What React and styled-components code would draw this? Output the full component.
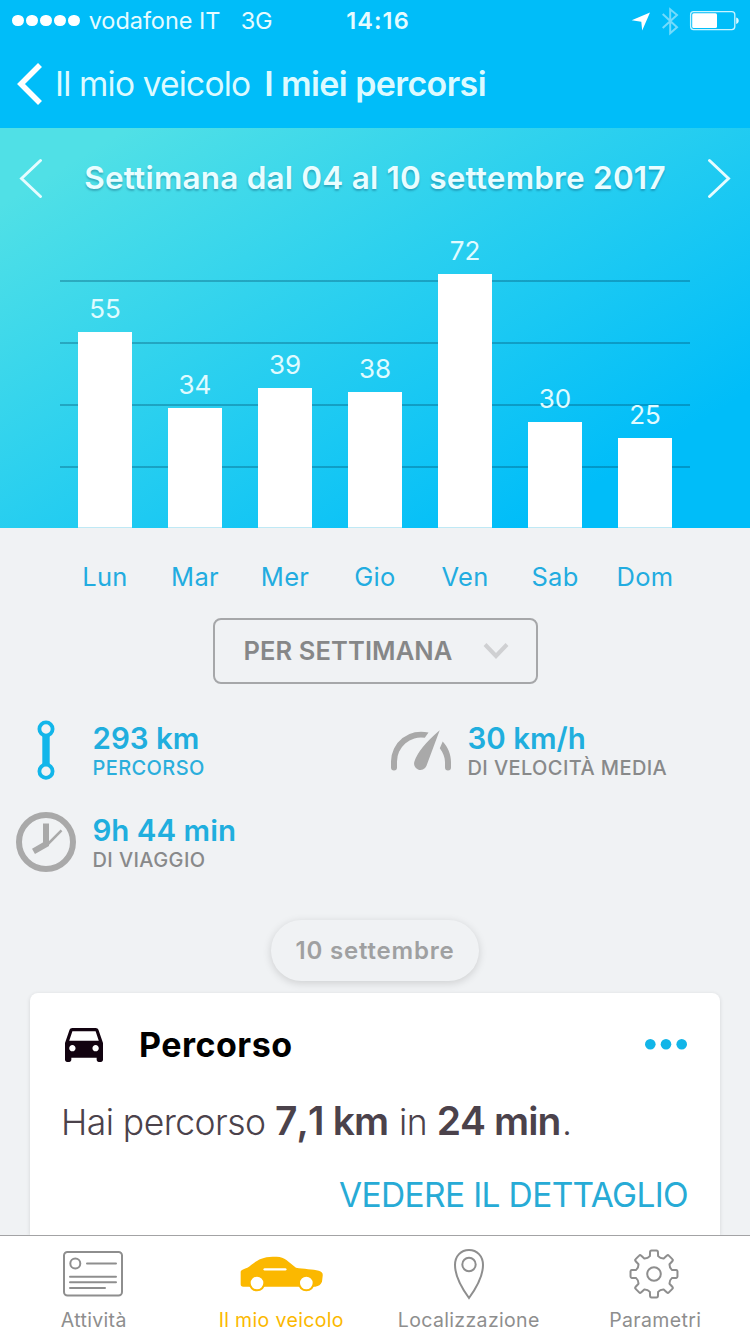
import React from "react";
import styled, { createGlobalStyle } from "styled-components";

const GlobalStyle = createGlobalStyle`
  * {
    box-sizing: border-box;
  }
  body {
    margin: 0;
    background: #f0f2f4;
    font-family: Inter, "Liberation Sans", sans-serif;
  }
  svg {
    display: block;
    flex: none;
  }
`;

const Screen = styled.div`
  width: 750px;
  height: 1334px;
  overflow: hidden;
  display: flex;
  flex-direction: column;
  background: #f0f2f4;
`;

const StatusBar = styled.div`
  height: 41px;
  flex: none;
  display: grid;
  grid-template-columns: 1fr auto 1fr;
  align-items: center;
  padding: 0 11px 0 12px;
  background: #00bdf9;
  color: #e6fbff;
  font-size: 23.5px;
  line-height: 41px;
`;

const Carrier = styled.div`
  display: flex;
  align-items: center;
  span {
    margin-left: 8.8px;
    letter-spacing: -0.05px;
  }
  span + span {
    margin-left: 20.5px;
    letter-spacing: -0.4px;
  }
`;

const Signal = styled.div`
  display: flex;
  gap: 2.6px;
  i {
    width: 11.5px;
    height: 11.5px;
    border-radius: 50%;
    background: #fff;
  }
`;

const Clock = styled.div`
  padding-left: 5px;
  font-weight: 600;
  letter-spacing: 1.1px;
`;

const StatusIcons = styled.div`
  display: flex;
  justify-content: flex-end;
  align-items: center;
`;

const Navbar = styled.nav`
  height: 87px;
  flex: none;
  display: flex;
  align-items: flex-start;
  padding: 0 16px 0 15px;
  background: #00bdf9;
  color: #dcfaff;
  font-size: 34px;
  line-height: 86px;
`;

const BackLink = styled.a`
  display: flex;
  align-items: center;
  font-size: 33.5px;
  letter-spacing: -0.82px;
  svg {
    margin-right: 10px;
  }
`;

const Title = styled.h1`
  margin: 0 0 0 14px;
  font-size: 34px;
  font-weight: 600;
  letter-spacing: -0.6px;
  line-height: 86px;
`;

const ChartPanel = styled.section`
  height: 400px;
  flex: none;
  display: flex;
  flex-direction: column;
  background: linear-gradient(149deg, #50e0e6 9%, #00bdf9 84%);
`;

const WeekPicker = styled.div`
  flex: none;
  display: flex;
  justify-content: space-between;
  align-items: center;
  height: 100px;
  padding: 0 19px;
  h2 {
    margin: 0;
    font-size: 31.5px;
    font-weight: 600;
    line-height: 100px;
    letter-spacing: 0.2px;
    color: #e9fdff;
    text-shadow: 0 2px 2px rgba(0, 60, 90, 0.3);
  }
`;

/* one rule every 62px, the first one 52px below the week picker */
const Plot = styled.div`
  flex: 1;
  margin: 0 60px;
  display: grid;
  grid-template-columns: repeat(7, 1fr);
  align-items: end;
  background: repeating-linear-gradient(
      to bottom,
      rgba(0, 70, 100, 0.32) 0,
      rgba(0, 70, 100, 0.32) 2px,
      transparent 2px,
      transparent 62px
    )
    0 52px / 100% 248px no-repeat;
`;

const Column = styled.div`
  display: flex;
  flex-direction: column;
  align-items: center;
  span {
    font-size: 26px;
    line-height: 46px;
    letter-spacing: 0;
    color: #e0fbff;
  }
`;

const Bar = styled.div`
  width: 54px;
  background: #fff;
  border-bottom: 1px solid #bfe9f5;
`;

const Days = styled.div`
  flex: none;
  height: 90px;
  padding: 0 60px;
  display: grid;
  grid-template-columns: repeat(7, 1fr);
  text-align: center;
  font-size: 25.5px;
  line-height: 98px;
  letter-spacing: 0.3px;
  color: #22ace0;
`;

const PeriodSelect = styled.button`
  flex: none;
  align-self: center;
  width: 325px;
  height: 66px;
  padding: 0 27px 1px 29px;
  display: flex;
  justify-content: space-between;
  align-items: center;
  background: transparent;
  border: 2px solid #a6a7a9;
  border-radius: 8px;
  font-family: inherit;
  font-size: 25.5px;
  font-weight: 600;
  letter-spacing: 0.1px;
  color: #868788;
`;

const Stats = styled.div`
  flex: none;
  display: grid;
  grid-template-columns: 375px 359px;
  grid-auto-rows: 60px;
  row-gap: 32px;
  margin-top: 36px;
  padding-left: 16px;
`;

const Stat = styled.div`
  display: flex;
  gap: 16.5px;
  align-items: center;
`;

const StatIcon = styled.div`
  width: 60px;
  display: flex;
  justify-content: center;
`;

const StatValue = styled.div`
  padding-top: 2px;
  font-size: 29.5px;
  font-weight: 600;
  line-height: 34px;
  color: #20aede;
`;

const StatLabel = styled.div`
  font-size: 20px;
  font-weight: 500;
  line-height: 26px;
  letter-spacing: 0.4px;
  white-space: nowrap;
  color: ${(props) => (props.$active ? "#2aaedc" : "#88898a")};
`;

const DatePill = styled.div`
  flex: none;
  align-self: center;
  width: 208px;
  height: 61px;
  margin-top: 48px;
  border-radius: 31px;
  box-shadow: 0 2px 9px rgba(0, 0, 0, 0.15);
  text-align: center;
  font-size: 24px;
  font-weight: 600;
  line-height: 61px;
  letter-spacing: 0.8px;
  color: #9fa0a1;
`;

const Card = styled.article`
  flex: 1;
  margin: 12px 30px 0;
  padding: 0 32px 0 31px;
  background: #fff;
  border-radius: 8px 8px 0 0;
  box-shadow: 0 1px 4px rgba(0, 0, 0, 0.12);
`;

const CardHeader = styled.header`
  display: flex;
  align-items: center;
  height: 103px;
  padding-left: 4px;
  h3 {
    flex: 1;
    margin: 0 0 0 36px;
    font-size: 34px;
    font-weight: 700;
    letter-spacing: 0.5px;
    color: #000;
  }
`;

const CardText = styled.p`
  margin: 0;
  height: 66px;
  line-height: 50px;
  font-size: 35.5px;
  font-weight: 300;
  letter-spacing: -0.55px;
  color: #4b424b;
  b {
    margin-right: 1.5px;
    font-size: 39px;
    font-weight: 600;
    font-kerning: none;
    letter-spacing: -0.9px;
  }
`;

const CardAction = styled.div`
  text-align: right;
  font-size: 33.5px;
  line-height: 66px;
  letter-spacing: -0.65px;
  color: #27abd6;
`;

const Tabbar = styled.nav`
  flex: none;
  height: 99px;
  display: grid;
  grid-template-columns: repeat(4, 1fr);
  background: #fff;
  border-top: 1px solid #a3a3a5;
`;

const Tab = styled.a`
  display: flex;
  flex-direction: column;
  align-items: center;
  padding-right: ${(props) => props.$right || 0}px;
  color: ${(props) => (props.$active ? "#fbb800" : "#8e8e8e")};
  font-size: 19.5px;
  line-height: 27px;
  letter-spacing: 0.35px;
  white-space: nowrap;
`;

const TabIcon = styled.div`
  height: 71px;
  padding: 4px ${(props) => props.$right || 0}px 0 ${(props) => props.$left || 0}px;
  display: flex;
  align-items: center;
`;

const week = [
  { day: "Lun", km: 55, height: 195.7 },
  { day: "Mar", km: 34, height: 119.7 },
  { day: "Mer", km: 39, height: 139.6 },
  { day: "Gio", km: 38, height: 136 },
  { day: "Ven", km: 72, height: 254 },
  { day: "Sab", km: 30, height: 105.7 },
  { day: "Dom", km: 25, height: 89.7 },
];

const gearPath = () => {
  const at = (r, deg) => {
    const a = (deg * Math.PI) / 180;
    return `${(25 + r * Math.sin(a)).toFixed(2)} ${(25 - r * Math.cos(a)).toFixed(2)}`;
  };
  let d = "";
  for (let i = 0; i < 8; i++) {
    const t = i * 45;
    d += `${i ? "L" : "M"}${at(18.3, t - 13)}L${at(22.6, t - 10)}Q${at(23.8, t - 9)} ${at(23.6, t - 6)}`;
    d += `L${at(23.6, t + 6)}Q${at(23.8, t + 9)} ${at(22.6, t + 10)}L${at(18.3, t + 13)}`;
    d += `Q${at(16.6, t + 22.5)} ${at(18.3, t + 32)}`;
  }
  return d + "Z";
};

const BackIcon = () => (
  <svg width="30" height="44" viewBox="0 0 30 44" fill="none">
    <path d="M25 3 6 22l19 19" stroke="#fff" strokeWidth="5.6" />
  </svg>
);

const Arrow = ({ d }) => (
  <svg width="24" height="40" viewBox="0 0 24 40" fill="none">
    <path d={d} stroke="#e6fcff" strokeWidth="2.9" strokeLinecap="round" />
  </svg>
);

const StatusGlyphs = () => (
  <svg width="108" height="30" viewBox="631 5.5 108 30" fill="none">
    <path d="M650 12 642.2 30l-.9-8.8-9.6-1.5z" fill="#fff" />
    <path
      d="M662.7 13.5 677 26.8l-6.8 6V8.8l6.8 5.8-14.300 13"
      stroke="#fff"
      strokeOpacity=".45"
      strokeWidth="2"
    />
    <rect x="690.6" y="11.1" width="44.2" height="18" rx="3" stroke="#c9f4ff" strokeWidth="1.3" />
    <rect x="692.2" y="12.7" width="24.8" height="14.8" rx="1.5" fill="#fff" />
    <path d="M736.2 17c1.5.3 2.500 1.6 2.500 3.200s-1 2.900-2.500 3.200z" fill="#dff9ff" />
  </svg>
);

const RouteIcon = () => (
  <svg width="18" height="60" viewBox="0 0 18 60" fill="none" stroke="#12b6ea">
    <path d="M9 14v32" strokeWidth="7.4" />
    <circle cx="9" cy="9" r="6.6" strokeWidth="3.8" />
    <circle cx="9" cy="51.3" r="6.6" strokeWidth="3.8" />
  </svg>
);

const SpeedIcon = () => (
  <svg width="60" height="60" viewBox="0 -10 60 60" fill="#a9a9a9">
    <path d="M37.5 2.6A30 30 0 0 0 0 32v5.5a3 3 0 0 0 6 0V32A24 24 0 0 1 33.8 7.8z" />
    <path d="M48.7.3 35.4 36A6.200 6.200 0 1 1 23.600 31Q28 18 48.700.3z" />
    <path d="M51.7 11.5C57 17 60 24.5 60 32v5.5a3 3 0 0 1-6 0V32c0-5-2-9.500-5.200-13.800z" />
  </svg>
);

const TimeIcon = () => (
  <svg width="60" height="60" viewBox="0 0 60 60" fill="none" stroke="#a9a9a9">
    <circle cx="30" cy="30" r="27" strokeWidth="6" />
    <path d="M30 11.5v20.7L17.5 39.3" strokeWidth="6" />
    <path d="M31 33 45.500 18.300" strokeWidth="2.5" />
  </svg>
);

const CarFrontIcon = () => (
  <svg width="38" height="34" viewBox="3 5 18 16">
    <path
      fill="#120310"
      d="M18.92 6.01C18.72 5.42 18.16 5 17.5 5h-11c-.66 0-1.21.42-1.42 1.01L3 12v8c0 .55.45 1 1 1h1c.55 0 1-.45 1-1v-1h12v1c0 .55.45 1 1 1h1c.55 0 1-.45 1-1v-8l-2.08-5.99zM6.500 16c-.83 0-1.500-.67-1.500-1.500S5.670 13 6.500 13s1.500.67 1.500 1.500S7.330 16 6.500 16zm11 0c-.83 0-1.500-.67-1.500-1.500s.67-1.500 1.500-1.500 1.500.67 1.500 1.500-.67 1.500-1.500 1.500zM5 11l1.500-4.500h11L19 11H5z"
    />
  </svg>
);

const MoreIcon = () => (
  <svg width="44" height="14" viewBox="0 0 44 14" fill="#12b5e8">
    <circle cx="6.3" cy="6.3" r="5.3" />
    <circle cx="22" cy="6.3" r="5.3" />
    <circle cx="37.7" cy="6.3" r="5.3" />
  </svg>
);

const NewsIcon = () => (
  <svg width="60" height="46" viewBox="0 0 60 46" fill="none" stroke="#8e8e8e" strokeWidth="2">
    <rect x="1" y="1" width="58" height="43.5" rx="3.5" />
    <circle cx="12.3" cy="12.6" r="5" />
    <path d="M24 12.6h29M7 25.7h46M7 31.3h46M7 36.9h35" strokeLinecap="round" />
  </svg>
);

const CarSideIcon = () => (
  <svg width="84" height="37" viewBox="0 0 252 111">
    <path
      fill="#fbb800"
      d="M2 88V52c0-8 8-9 20-14C40 28 55 5 98 5h12c25 0 34 15 58 33 22 4 52 4 68 9 11 3 13 8 12 16l-2 17c-4 9-10 13-20 15H10c-6 0-8-2-8-7z"
    />
    <path d="M74 43h62" stroke="#fff" strokeWidth="7" strokeLinecap="round" />
    <circle cx="51" cy="84" r="22" fill="#fff" stroke="#fbb800" strokeWidth="6" />
    <circle cx="199" cy="84" r="22" fill="#fff" stroke="#fbb800" strokeWidth="6" />
  </svg>
);

const PinIcon = () => (
  <svg width="32" height="52" viewBox="0 0 32 52" fill="none" stroke="#8e8e8e" strokeWidth="2">
    <path d="M16 50C10.5 42.5 2 29 2 17 2 8 8 2 16 2s14 6 14 15c0 12-8.500 25.500-14 33z" />
    <circle cx="16" cy="16.5" r="6.7" />
  </svg>
);

const GearIcon = () => (
  <svg width="50" height="50" viewBox="0 0 50 50" fill="none" stroke="#8e8e8e" strokeWidth="2">
    <path d={gearPath()} strokeLinejoin="round" />
    <circle cx="25" cy="25" r="6.8" />
  </svg>
);

const App = () => {
  return (
    <Screen>
      <GlobalStyle />
      <StatusBar>
        <Carrier>
          <Signal>
            <i />
            <i />
            <i />
            <i />
            <i />
          </Signal>
          <span>vodafone IT</span>
          <span>3G</span>
        </Carrier>
        <Clock>14:16</Clock>
        <StatusIcons>
          <StatusGlyphs />
        </StatusIcons>
      </StatusBar>
      <Navbar>
        <BackLink>
          <BackIcon />
          Il mio veicolo
        </BackLink>
        <Title>I miei percorsi</Title>
      </Navbar>
      <ChartPanel>
        <WeekPicker>
          <Arrow d="M21.5 2.500 2.500 20.500l19 18" />
          <h2>Settimana dal 04 al 10 settembre 2017</h2>
          <Arrow d="M2.5 2.500l19 18-19 18" />
        </WeekPicker>
        <Plot>
          {week.map((item) => (
            <Column key={item.day}>
              <span>{item.km}</span>
              <Bar style={{ height: item.height }} />
            </Column>
          ))}
        </Plot>
      </ChartPanel>
      <Days>
        {week.map((item) => (
          <span key={item.day}>{item.day}</span>
        ))}
      </Days>
      <PeriodSelect>
        PER SETTIMANA
        <svg width="26" height="18" viewBox="0 0 26 18" fill="none">
          <path d="m2 2.5 11 11.5L24 2.5" stroke="#cfd0d2" strokeWidth="4" />
        </svg>
      </PeriodSelect>
      <Stats>
        <Stat>
          <StatIcon>
            <RouteIcon />
          </StatIcon>
          <div>
            <StatValue>293 km</StatValue>
            <StatLabel $active>PERCORSO</StatLabel>
          </div>
        </Stat>
        <Stat>
          <StatIcon>
            <SpeedIcon />
          </StatIcon>
          <div>
            <StatValue>30 km/h</StatValue>
            <StatLabel>DI VELOCITÀ MEDIA</StatLabel>
          </div>
        </Stat>
        <Stat>
          <StatIcon>
            <TimeIcon />
          </StatIcon>
          <div>
            <StatValue>9h 44 min</StatValue>
            <StatLabel>DI VIAGGIO</StatLabel>
          </div>
        </Stat>
      </Stats>
      <DatePill>10 settembre</DatePill>
      <Card>
        <CardHeader>
          <CarFrontIcon />
          <h3>Percorso</h3>
          <MoreIcon />
        </CardHeader>
        <CardText>
          Hai percorso <b>7,1 km</b> in <b>24 min</b>.
        </CardText>
        <CardAction>VEDERE IL DETTAGLIO</CardAction>
      </Card>
      <Tabbar>
        <Tab>
          <TabIcon $right={1}>
            <NewsIcon />
          </TabIcon>
          Attività
        </Tab>
        <Tab $active>
          <TabIcon $left={1}>
            <CarSideIcon />
          </TabIcon>
          Il mio veicolo
        </Tab>
        <Tab>
          <TabIcon>
            <PinIcon />
          </TabIcon>
          Localizzazione
        </Tab>
        <Tab $right={2}>
          <TabIcon $right={2}>
            <GearIcon />
          </TabIcon>
          Parametri
        </Tab>
      </Tabbar>
    </Screen>
  );
};

export default App;
